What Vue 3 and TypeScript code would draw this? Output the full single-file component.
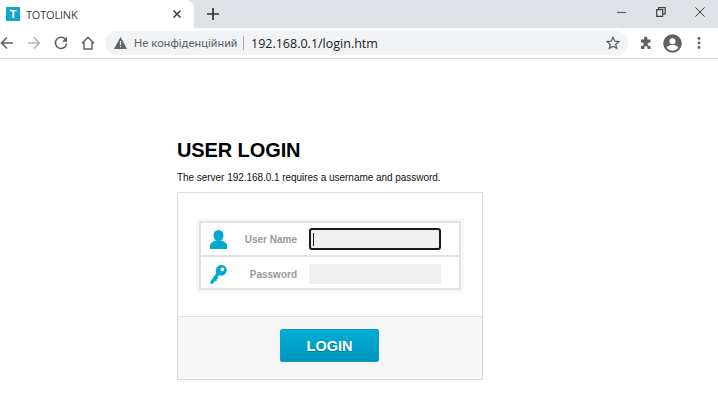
<script setup lang="ts">
const title: string = 'USER LOGIN'
</script>

<template>
  <div class="page">
    <div class="tabstrip">
      <div class="tab">
        <span class="favicon">T</span>
        <span class="tabtitle">TOTOLINK</span>
        <svg class="tabclose" width="10" height="10" viewBox="0 0 10 10"><path d="M1.5 1.5l7 7M8.5 1.500l-7 7" stroke="#3c4043" stroke-width="1.6" fill="none"/></svg>
      </div>
      <svg class="newtab" width="12" height="12" viewBox="0 0 12 12"><path d="M6 0v12M0 6h12" stroke="#303336" stroke-width="1.7" fill="none"/></svg>
      <div class="spacer"></div>
      <div class="winbtns">
        <svg width="10" height="10" viewBox="0 0 10 10"><path d="M0 5.500h9" stroke="#5f6368" stroke-width="1.2"/></svg>
        <svg width="10" height="10" viewBox="0 0 10 10"><path d="M.7 2.700h6v6.600h-6zM2.600 2.700V.7h6.600v6.200H6.700" stroke="#3c4043" stroke-width="1.2" fill="none"/></svg>
        <svg width="10" height="10" viewBox="0 0 10 10"><path d="M.5.5l9 9M9.500.5l-9 9" stroke="#3c4043" stroke-width="1" fill="none"/></svg>
      </div>
    </div>
    <div class="toolbar">
      <div class="navicons">
        <svg width="14" height="14" viewBox="0 0 14 14"><path d="M13 7H2M7 1.500L1.500 7 7 12.500" stroke="#5f6368" stroke-width="1.6" fill="none"/></svg>
        <svg width="14" height="14" viewBox="0 0 14 14"><path d="M1 7h11M7 1.500L12.500 7 7 12.500" stroke="#b4b7ba" stroke-width="1.6" fill="none"/></svg>
        <svg width="14" height="14" viewBox="0 0 14 14"><path d="M12 4.200A5.600 5.600 0 1 0 12.600 7.600" stroke="#5f6368" stroke-width="1.6" fill="none"/><path d="M13 .8v5H8z" fill="#5f6368"/></svg>
        <svg width="14" height="14" viewBox="0 0 14 14"><path d="M1 7.200L7 1.400l6 5.800M3 6v7h8V6" stroke="#5f6368" stroke-width="1.5" fill="none"/></svg>
      </div>
      <div class="omnibox">
        <svg width="13" height="12" viewBox="0 0 13 12"><path d="M6.500 0L13 12H0z" fill="#5f6368"/><path d="M5.900 4h1.200v4H5.900zM5.900 9h1.200v1.200H5.900z" fill="#f1f3f4"/></svg>
        <span class="insecure">Не конфіденційний</span>
        <span class="divider"></span>
        <span class="url">192.168.0.1/login.htm</span>
        <svg class="star" width="14" height="14" viewBox="0 0 14 14"><path d="M7 1.300l1.700 3.900 4.200.4-3.200 2.800 1 4.100L7 10.300l-3.700 2.200 1-4.100L1.100 5.600l4.200-.4z" stroke="#5f6368" stroke-width="1.3" fill="none"/></svg>
      </div>
      <div class="exticons">
        <svg width="14" height="14" viewBox="0 0 14 14"><path d="M5 2.200a1.700 1.700 0 0 1 3.400 0V3.500h3.100v3h-1.200a1.700 1.700 0 0 0 0 3.400h1.200v3h-3v-1.200a1.600 1.600 0 0 0-3.200 0v1.200h-3.300V9.900h1a1.700 1.700 0 0 0 0-3.400h-1v-3H5z" fill="#5f6368"/></svg>
        <svg width="19" height="19" viewBox="0 0 20 20"><circle cx="10" cy="10" r="9.800" fill="#5f6368"/><circle cx="10" cy="7.600" r="3.200" fill="#fff"/><path d="M3.800 14.400c1.400-2.200 3.800-3 6.200-3s4.800.8 6.200 3A7.800 7.800 0 0 1 10 17.600a7.800 7.800 0 0 1-6.200-3.200z" fill="#fff"/></svg>
        <svg class="dots" width="4" height="14" viewBox="0 0 4 14"><circle cx="2" cy="2.500" r="1.400" fill="#5f6368"/><circle cx="2" cy="7" r="1.400" fill="#5f6368"/><circle cx="2" cy="11.500" r="1.400" fill="#5f6368"/></svg>
      </div>
    </div>
    <main class="content">
      <h1 class="heading">{{ title }}</h1>
      <p class="sub">The server 192.168.0.1 requires a username and password.</p>
      <section class="card">
        <div class="cardbody">
          <div class="formwrap">
            <div class="row">
              <svg class="ricon" width="17" height="19" viewBox="0 0 17 19"><ellipse cx="8.500" cy="5.500" rx="5" ry="5.500" fill="#00a9d0"/><path d="M0 19v-3c0-3 3-4.500 5.500-5.500h6C14 11.500 17 13 17 16v3z" fill="#00a9d0"/></svg>
              <span class="lbl lbl1">User Name</span>
              <div class="field focused"><span class="caret"></span></div>
            </div>
            <div class="row row2">
              <svg class="ricon" width="17" height="19" viewBox="0 0 17 19"><path fill-rule="evenodd" d="M11.300 0C14.400 0 16.700 2.300 16.700 5.300s-2.400 5.400-5.400 5.400c-.8 0-1.500-.2-2.200-.5L7.500 12l1 1.300-2 .9.300 1.800-2.100.3L3 18.800l-1.800.2L0 17.300 6.300 8.200C6 7.500 5.900 6.800 5.900 6 5.900 2.600 8.200 0 11.300 0zm1 2.400a1.900 1.900 0 1 0 0 3.800 1.900 1.900 0 0 0 0-3.800z" fill="#00a9d0"/></svg>
              <span class="lbl lbl2">Password</span>
              <div class="field"></div>
            </div>
          </div>
        </div>
        <div class="cardfoot">
          <button class="login" type="button">LOGIN</button>
        </div>
      </section>
    </main>
  </div>
</template>

<style>
html, body { margin: 0; background: #fff; overflow: hidden; }
</style>

<style scoped>
.page { width: 718px; height: 408px; display: flex; flex-direction: column; font-family: "Liberation Sans", Arial, sans-serif; }
.tabstrip { height: 28px; background: #dee1e6; display: flex; align-items: center; flex: none; }
.tab { width: 194px; height: 28px; background: #fff; border-top-right-radius: 8px; display: flex; align-items: center; box-sizing: border-box; padding-left: 6px; }
.favicon { width: 14px; height: 14px; background: #12a5cf; color: #fff; font: bold 11px/14px "Liberation Sans", sans-serif; text-align: center; }
.tabtitle { font: 11px "Open Sans", sans-serif; color: #3c4043; margin-left: 6px; width: 146px; letter-spacing: -0.2px; }
.newtab { margin-left: 13px; }
.spacer { flex: 1; }
.winbtns { display: flex; align-items: center; gap: 29px; padding-right: 13px; margin-top: -4px; }
.toolbar { height: 31px; box-sizing: border-box; border-bottom: 1px solid #e0e0e0; background: #fff; display: flex; align-items: center; flex: none; }
.navicons { display: flex; align-items: center; gap: 13px; width: 105px; box-sizing: border-box; padding-left: 0; }
.omnibox { width: 523px; height: 24px; border-radius: 12px; background: #f1f3f4; display: flex; align-items: center; box-sizing: border-box; padding-left: 9px; }
.insecure { font: 11.500px Roboto, sans-serif; color: #5f6368; margin-left: 7px; width: 109px; white-space: nowrap; }
.divider { width: 1px; height: 14px; background: #a8abae; }
.url { font: 12.500px "Open Sans", sans-serif; color: #202124; margin-left: 7px; }
.star { margin-left: auto; margin-right: 8px; }
.exticons { display: flex; align-items: center; padding-left: 11px; gap: 10px; }
.dots { margin-left: 5px; }
.content { padding: 79px 0 0 177px; }
.heading { margin: 0; font: bold 20px/24px "Liberation Sans", sans-serif; color: #000; height: 24px; letter-spacing: -0.1px; }
.sub { margin: 9px 0 0; font: 10px/14px "Liberation Sans", sans-serif; color: #111; letter-spacing: -0.04px; }
.card { width: 306px; height: 188px; margin-top: 7px; box-sizing: border-box; border: 1px solid #dcdcdc; display: flex; flex-direction: column; }
.cardbody { height: 123px; flex: none; box-sizing: border-box; padding: 28px 0 0 21px; background: #fff; }
.formwrap { width: 262px; height: 69px; box-sizing: border-box; border: 2px solid #e2e2e2; outline: 3px solid #f7f7f7; }
.row { height: 32px; display: flex; align-items: center; box-sizing: border-box; padding-left: 9px; }
.row2 { border-top: 2px solid #e2e2e2; height: 33px; padding-top: 3px; }
.ricon { flex: none; }
.lbl { font: bold 10px "Liberation Sans", sans-serif; color: #999; flex: none; text-align: right; width: 70px; }
.field { width: 132px; height: 20px; background: #f0f0f0; margin-left: 12px; box-sizing: border-box; display: flex; align-items: center; }
.focused { height: 22px; border: 2px solid #1a1a1a; border-radius: 3px; padding-left: 2px; }
.caret { width: 1px; height: 13px; background: #222; }
.cardfoot { flex: 1; background: #f6f6f6; border-top: 1px solid #e2e2e2; display: flex; justify-content: center; align-items: flex-start; padding: 12px 1px 0 0; }
.login { width: 99px; height: 33px; padding: 0; border: 1px solid #0f9cc4; border-radius: 2px; background: linear-gradient(#00aed5, #0094bd); color: #fff; font: bold 14.500px "Liberation Sans", sans-serif; text-shadow: 0 1px 1px rgba(0,60,90,.4); }
</style>
